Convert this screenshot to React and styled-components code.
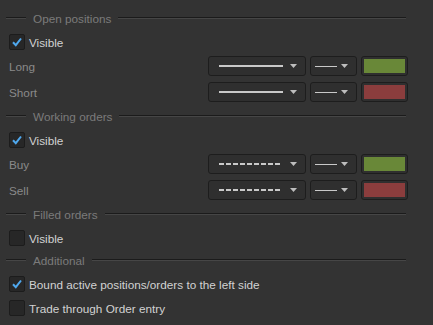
import React from "react";
import styled, { createGlobalStyle } from "styled-components";

const GlobalStyle = createGlobalStyle`
    html, body {
        margin: 0;
        padding: 0;
        background: #333333;
    }
    body {
        font-family: "Liberation Sans", Arial, sans-serif;
        font-size: 11.75px;
    }
`;

// 섹션 데이터
const sections = [
    {
        title: "Open positions",
        checks: [{ label: "Visible", checked: true }],
        rows: [
            { label: "Long", dashed: false, color: "#698838" },
            { label: "Short", dashed: false, color: "#8b3d3d" },
        ],
    },
    {
        title: "Working orders",
        checks: [{ label: "Visible", checked: true }],
        rows: [
            { label: "Buy", dashed: true, color: "#698838" },
            { label: "Sell", dashed: true, color: "#8b3d3d" },
        ],
    },
    {
        title: "Filled orders",
        checks: [{ label: "Visible", checked: false }],
        rows: [],
    },
    {
        title: "Additional",
        checks: [
            { label: "Bound active positions/orders to the left side", checked: true },
            { label: "Trade through Order entry", checked: false },
        ],
        rows: [],
    },
];

function Arrow() {
    return (
        <svg width="7" height="4" viewBox="0 0 7 4">
            <path d="M0 0 L7 0 L3.5 4 Z" fill="#bdbdbd" />
        </svg>
    );
}

function CheckRow({ label, checked }) {
    return (
        <CheckLine>
            <Box>
                {checked && (
                    <svg width="12" height="12" viewBox="0 0 12 12">
                        <path d="M2 6.2 L4.8 9.2 L10 2.5" fill="none" stroke="#4fa8ee" strokeWidth="2" />
                    </svg>
                )}
            </Box>
            <CheckText>{label}</CheckText>
        </CheckLine>
    );
}

function StyleRow({ label, dashed, color }) {
    return (
        <SelectLine>
            <RowLabel>{label}</RowLabel>
            <Controls>
                <Select width={98}>
                    <LinePreview dashed={dashed} />
                    <Arrow />
                </Select>
                <Select width={47} small>
                    <ThinLine />
                    <Arrow />
                </Select>
                <Swatch>
                    <SwatchFill style={{ background: color }} />
                </Swatch>
            </Controls>
        </SelectLine>
    );
}

export default function App() {
    return (
        <>
            <GlobalStyle />
            <Panel>
                {sections.map((s) => (
                    <React.Fragment key={s.title}>
                        <Header>
                            <Rule width={20} />
                            <HeaderText>{s.title}</HeaderText>
                            <Rule />
                        </Header>
                        {s.checks.map((c) => (
                            <CheckRow key={c.label} {...c} />
                        ))}
                        {s.rows.map((r) => (
                            <StyleRow key={r.label} {...r} />
                        ))}
                    </React.Fragment>
                ))}
            </Panel>
        </>
    );
}

const Panel = styled.div`
    width: 433px;
    height: 325px;
    box-sizing: border-box;
    padding: 7px 25px 0 9px;
    display: flex;
    flex-direction: column;
    background: #333333;
    overflow: hidden;
`;

const Header = styled.div`
    height: 22px;
    display: flex;
    align-items: center;
    gap: 7px;
    margin-left: -3px;
    margin-right: 2px;
`;

const Rule = styled.div`
    flex: ${(props) => (props.width ? `0 0 ${props.width}px` : "1")};
    border-top: 1px solid #1b1b1b;
    border-bottom: 1px solid #464646;
    box-sizing: border-box;
    height: 2px;
`;

const HeaderText = styled.span`
    color: #7b7b7b;
`;

const CheckLine = styled.div`
    height: 24px;
    display: flex;
    align-items: center;
    padding-top: 2px;
    box-sizing: border-box;
    gap: 4px;
`;

const Box = styled.div`
    width: 16px;
    height: 16px;
    box-sizing: border-box;
    border: 1px solid #1c1c1c;
    border-radius: 2px;
    background: #272727;
    display: flex;
    align-items: center;
    justify-content: center;
`;

const CheckText = styled.span`
    color: #d2d2d2;
`;

const SelectLine = styled.div`
    height: 26px;
    display: flex;
    align-items: center;
    justify-content: space-between;
`;

const RowLabel = styled.span`
    color: #8a8a8a;
`;

const Controls = styled.div`
    display: flex;
    gap: 4px;
`;

const Select = styled.div`
    width: ${(props) => props.width}px;
    height: 20px;
    box-sizing: border-box;
    border: 1px solid #1d1d1d;
    border-radius: 3px;
    background: #2f2f2f;
    display: flex;
    align-items: center;
    justify-content: space-between;
    padding: 0 8px 0 ${(props) => (props.small ? 4 : 10)}px;
`;

const LinePreview = styled.div`
    width: ${(props) => (props.dashed ? 61 : 64)}px;
    height: 2px;
    background: ${(props) =>
        props.dashed
            ? "repeating-linear-gradient(90deg, #c9c9c9 0 5px, transparent 5px 7px)"
            : "#c9c9c9"};
`;

const ThinLine = styled.div`
    width: 22px;
    height: 1px;
    background: #c9c9c9;
`;

const Swatch = styled.div`
    width: 47px;
    height: 20px;
    box-sizing: border-box;
    border: 1px solid #1d1d1d;
    border-radius: 3px;
    background: #2f2f2f;
    padding: 2px;
    display: flex;
`;

const SwatchFill = styled.div`
    flex: 1;
`;
